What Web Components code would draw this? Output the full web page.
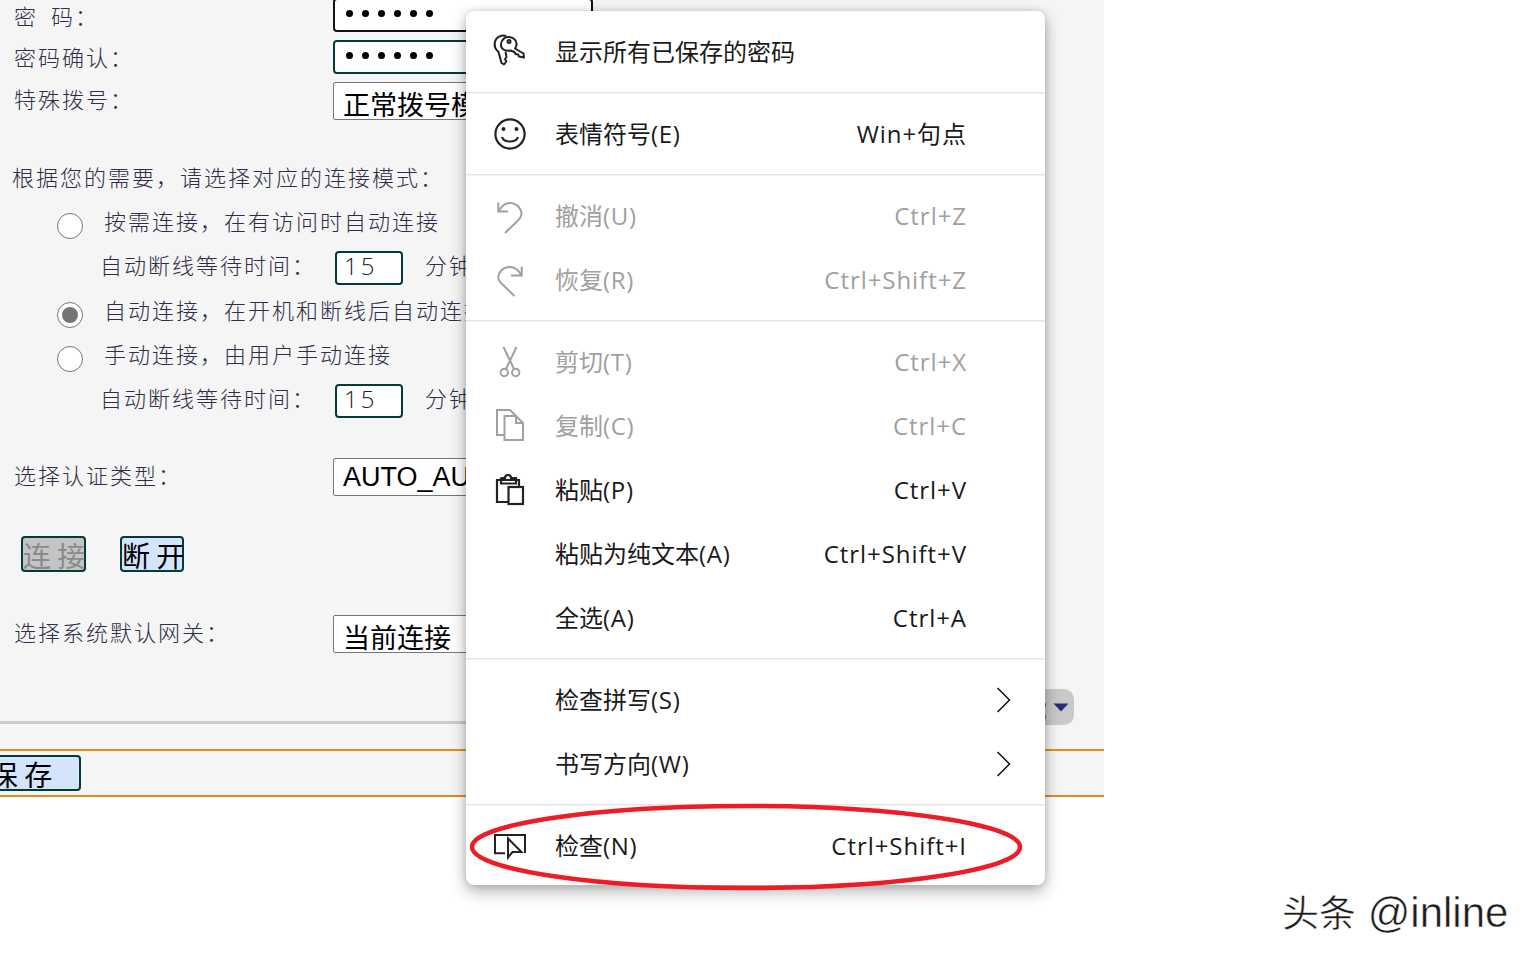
<!DOCTYPE html>
<html lang="zh-CN">
<head>
<meta charset="utf-8">
<title>连接设置</title>
<style>
html,body{margin:0;padding:0;background:#fff;overflow:hidden}
body{width:1536px;height:960px;position:relative;font-family:"Noto Sans CJK SC",sans-serif}
</style>
</head>
<body>
<x-page>
  <x-row style="height:34px;margin-top:-2px" label="密&#x2002;码&#xFF1A;" lx="14" ly="0"><x-input type="pw" dark w="260" h="34"></x-input></x-row>
  <x-row style="height:34px;margin-top:8px" label="密码确认&#xFF1A;" lx="14" ly="-1"><x-input type="pw" w="260" h="34"></x-input></x-row>
  <x-row style="height:38px;margin-top:8px" label="特殊拨号&#xFF1A;" lx="14" ly="-3"><x-select>正常拨号模式</x-select></x-row>

  <x-row style="height:34px;margin-top:41px" label="根据您的需要&#xFF0C;请选择对应的连接模式&#xFF1A;" lx="12" ly="-2"></x-row>

  <x-radio style="margin-top:11px" text="按需连接&#xFF0C;在有访问时自动连接"></x-radio>
  <x-wait style="margin-top:14px"></x-wait>
  <x-radio style="margin-top:10px" text="自动连接&#xFF0C;在开机和断线后自动连接" checked></x-radio>
  <x-radio style="margin-top:13px" text="手动连接&#xFF0C;由用户手动连接"></x-radio>
  <x-wait style="margin-top:14px"></x-wait>

  <x-row style="height:38px;margin-top:40px" label="选择认证类型&#xFF1A;" lx="14" ly="-3"><x-select latin>AUTO_AUTH</x-select></x-row>

  <x-actions style="margin-top:40px"></x-actions>

  <x-row style="height:38px;margin-top:43px" label="选择系统默认网关&#xFF1A;" lx="14" ly="-3"><x-select>当前连接</x-select></x-row>

  <x-footer style="margin-top:36px"></x-footer>
</x-page>

<x-menu>
  <x-group>
    <x-item label="显示所有已保存的密码"><svg viewBox="0 0 32 32" fill="none" stroke="#222" stroke-width="2" stroke-linejoin="round"><path d="M12.300 0 C8 -1.500 2.500 .5 1 5.500 C0 9.500 1.500 13.500 4.500 16 L7.500 27 L10 28.500 L12.300 25.500 L11 23 L12.500 21 L11.500 15.500"/><path d="M7 8 C7.500 3.500 11 .5 15.500 1 C20 1.500 23 5 22.500 9 C22.300 10.500 21.800 11.500 21 12.500 L29.500 17.500 L30 21.500 L25 20.500 L24 18.500 L21.500 18 L20.500 16 L16.500 14.500 C11 15.500 6.500 13 7 8 Z"/><circle cx="15" cy="5.500" r="1.500"/></svg></x-item>
  </x-group>
  <x-sep></x-sep>
  <x-group>
    <x-item label="表情符号(E)" shortcut="Win+句点"><svg viewBox="0 0 32 32" fill="none" stroke="#222" stroke-width="2.2"><circle cx="16" cy="16" r="14.6"/><circle cx="9.5" cy="11" r="2" fill="#222" stroke="none"/><circle cx="22.5" cy="11" r="2" fill="#222" stroke="none"/><path d="M8 19 C10 25 22 25 24 19"/></svg></x-item>
  </x-group>
  <x-sep></x-sep>
  <x-group>
    <x-item disabled label="撤消(U)" shortcut="Ctrl+Z"><svg viewBox="0 0 32 32" fill="none" stroke="#a0a0a0" stroke-width="2"><path d="M4.3 2.5 V11.5 H14"/><path d="M4.3 11.5 C8 5 12 3 16 3 C23 3 29 10 27 16 C26.500 18 25 19 24 20.500 L11 33"/></svg></x-item>
    <x-item disabled label="恢复(R)" shortcut="Ctrl+Shift+Z"><svg viewBox="0 0 32 32" fill="none" stroke="#a0a0a0" stroke-width="2"><path d="M27.700 2.500 V11.500 H17"/><path d="M27.700 11.500 C24 5 20 3 16 3 C9 3 3 9 4.500 15 C5 17 6 18 7 19 L20.500 32"/></svg></x-item>
  </x-group>
  <x-sep></x-sep>
  <x-group>
    <x-item disabled label="剪切(T)" shortcut="Ctrl+X"><svg viewBox="0 0 32 32" fill="none" stroke="#a0a0a0" stroke-width="2"><path d="M9.500 1 L20.500 24"/><path d="M22.500 1 L11.500 24"/><circle cx="10.300" cy="26.500" r="3.700"/><circle cx="21.700" cy="26.500" r="3.700"/></svg></x-item>
    <x-item disabled label="复制(C)" shortcut="Ctrl+C"><svg viewBox="0 0 32 32" fill="none" stroke="#a0a0a0" stroke-width="2"><path d="M10.500 25 H3 V0 H16 L22 6"/><path d="M10.500 6 H22 L29 13 V30 H10.500 Z"/><path d="M22 6 V13 H29"/></svg></x-item>
    <x-item label="粘贴(P)" shortcut="Ctrl+V"><svg viewBox="0 0 32 32" fill="none" stroke="#222" stroke-width="2.200"><path d="M14 28 H3 V6 H25 V12"/><path d="M7 3.500 V9.500 H22 V4 H17 C17 0 11 0 11 4 H7"/><rect x="14.500" y="13" width="14.500" height="17"/></svg></x-item>
    <x-item label="粘贴为纯文本(A)" shortcut="Ctrl+Shift+V"></x-item>
    <x-item label="全选(A)" shortcut="Ctrl+A"></x-item>
  </x-group>
  <x-sep></x-sep>
  <x-group>
    <x-item label="检查拼写(S)" chevron></x-item>
    <x-item label="书写方向(W)" chevron></x-item>
  </x-group>
  <x-sep></x-sep>
  <x-group style="padding-bottom:7px">
    <x-item label="检查(N)" shortcut="Ctrl+Shift+I"><svg viewBox="0 0 32 32" fill="none" stroke="#222" stroke-width="2"><path d="M11 23.300 H1 V5 H31 V23"/><path d="M14 8.500 V27.500 L18.500 22 H27.500 Z"/></svg></x-item>
  </x-group>
</x-menu>

<x-annotation></x-annotation>
<x-watermark></x-watermark>

<script>
const FORM = '"Noto Sans CJK SC",sans-serif';
function def(name, html, init){
  customElements.define(name, class extends HTMLElement{
    constructor(){super();this.attachShadow({mode:'open'}).innerHTML=html;}
    connectedCallback(){ if(init) init.call(this,this.shadowRoot); }
  });
}
def('x-page',`<style>
:host{display:block;width:1104px;height:797px;background:#f5f5f5;overflow:hidden;position:relative;font-family:${FORM};font-size:22px;letter-spacing:2px;font-weight:300;color:#2e2e48}
</style><slot></slot>`);

def('x-row',`<style>
:host{display:flex;align-items:center;position:relative}
.l{white-space:nowrap;line-height:1;flex:none}
.f{position:absolute;left:333px;top:0}
</style><span class="l"></span><span class="f"><slot></slot></span>`,function(r){
  const l=r.querySelector('.l');
  l.innerHTML=this.getAttribute('label');
  l.style.marginLeft=this.getAttribute('lx')+'px';
  l.style.marginTop=(2*(+this.getAttribute('ly')))+'px';
});

def('x-input',`<style>
:host{display:block;box-sizing:border-box;background:#fff;border:2px solid #033b3b;border-radius:4px;overflow:hidden}
:host([dark]){border-color:#111}
.d{display:flex;gap:9px;padding:9.5px 0 0 11px}
.d i{display:block;width:7px;height:7px;border-radius:50%;background:#000}
.n{display:block;font:300 24px/24px "Open Sans","Liberation Sans",sans-serif;letter-spacing:3px;color:#222;padding-left:7px;padding-top:1px}
</style><div class="d"></div>`,function(r){
  this.style.width=this.getAttribute('w')+'px';
  this.style.height=this.getAttribute('h')+'px';
  const d=r.querySelector('.d');
  if(this.getAttribute('type')==='pw'){ d.innerHTML='<i></i>'.repeat(6); }
  else { d.className='n'; d.textContent=this.getAttribute('value'); }
});

def('x-select',`<style>
:host{display:block;box-sizing:border-box;width:260px;height:38px;background:#fff;border:1px solid #777;border-radius:2px;overflow:hidden;font:400 27px/42px ${FORM};letter-spacing:0;color:#000;padding-left:9px;white-space:nowrap}
:host([latin]){font-family:"Liberation Sans",sans-serif;line-height:36px}
</style><slot></slot>`);

def('x-radio',`<style>
:host{display:flex;align-items:center;height:31px;padding-left:57px;position:relative}
.c{width:26px;height:26px;box-sizing:border-box;border:1px solid #777;border-radius:50%;background:#fff;flex:none;display:flex;align-items:center;justify-content:center;margin-top:9px}
:host([checked]) .c i{display:block;width:16px;height:16px;border-radius:50%;background:#757575}
.t{margin-left:21px;line-height:1;white-space:nowrap;margin-top:-4px}
</style><span class="c"><i></i></span><span class="t"></span>`,function(r){
  r.querySelector('.t').textContent=this.getAttribute('text');
});

def('x-wait',`<style>
:host{display:flex;align-items:center;height:34px;padding-left:100px;white-space:nowrap}
.t{width:235px;line-height:1;margin-top:-8px}
.u{margin-left:22px;line-height:1;margin-top:-8px}
</style><span class="t">自动断线等待时间&#xFF1A;</span><x-input w="68" h="34" type="num" value="15"></x-input><span class="u">分钟</span>`);

def('x-btn',`<style>
:host{display:block;box-sizing:border-box;height:36px;border:2px solid #033b3b;border-radius:4px;background:#d3e4fb;color:#000;font:400 28px/34px ${FORM};letter-spacing:0;text-align:center;white-space:pre;flex:none}
:host([disabled]){background:#c4c4c4;color:#8a8a8a}
</style><slot></slot>`);

def('x-actions',`<style>
:host{display:flex;padding-left:21px;gap:34px}
.a{width:65px}
.b{width:64px}
</style><x-btn class="a" disabled>连 接</x-btn><x-btn class="b">断 开</x-btn>`);

def('x-footer',`<style>
:host{display:block}
.dock{display:flex;justify-content:flex-end;padding-right:30px;height:36px}
.pill{width:60px;height:36px;background:#c9c9c9;border-radius:0 10px 10px 0;display:flex;align-items:center;justify-content:flex-end;padding-right:5px;box-sizing:border-box;position:relative}
.pill svg{display:block}
.pill i{position:absolute;left:30px;width:2px;height:4px;background:#5c7596}
.bar{height:3px;width:800px;background:#ccc;margin-top:-4px}
.save{margin-top:25px;border-top:2px solid #e88b1e;border-bottom:2px solid #e88b1e;height:44px;display:flex;align-items:center}
x-btn{width:120px;height:36px;margin-left:-39px}
</style><div class="dock"><div class="pill"><i style="top:14px"></i><i style="top:26px"></i><svg width="16" height="9" viewBox="0 0 16 9"><path d="M.5 .5 H15.500 L8 8.500 Z" fill="#2a2a7a"/></svg></div></div><div class="bar"></div><div class="save"><x-btn>保 存</x-btn></div>`);

def('x-menu',`<style>
:host{display:block;position:absolute;left:466px;top:11px;width:579px;background:#fff;border-radius:8px;box-shadow:0 6px 16px rgba(0,0,0,.32),0 0 6px rgba(0,0,0,.12);font-family:"Open Sans","Noto Sans CJK SC",sans-serif;font-size:24px;color:#1a1a1a;padding-top:1px}
</style><slot></slot>`);

def('x-group',`<style>:host{display:block;padding:8px 0}</style><slot></slot>`);
def('x-sep',`<style>:host{display:block;height:2px;background:linear-gradient(#e4e4e4 50%,#f2f2f2 50%)}</style>`);

def('x-item',`<style>
:host{display:flex;align-items:center;height:64px;position:relative;white-space:nowrap;color:#1a1a1a}
:host([disabled]){color:#a0a0a0}
.i{width:32px;height:32px;margin-left:28px;flex:none}
::slotted(svg){display:block;width:32px;height:32px;overflow:visible}
.l{margin-left:29px;flex:1;line-height:1}
.l b{font-weight:400;letter-spacing:.7px}
.s{margin-right:78px;line-height:1;letter-spacing:.95px}
.c{margin-right:34px;display:none}
:host([chevron]) .c{display:block}
:host([chevron]) .s{display:none}
</style><span class="i"><slot></slot></span><span class="l"></span><span class="s"></span>
<svg class="c" width="15" height="26" viewBox="0 0 15 26" fill="none" stroke="#111" stroke-width="1.500"><path d="M1.500 1 L13.500 13 L1.500 25"/></svg>`,function(r){
  const m=(this.getAttribute('label')).match(/^([^(]*)(\(.*\))?$/);
  const l=r.querySelector('.l');
  l.textContent=m[1];
  if(m[2]){const b=document.createElement('b');b.textContent=m[2];l.append(b);}
  r.querySelector('.s').textContent=this.getAttribute('shortcut')||'';
});

def('x-annotation',`<style>
:host{display:block;position:absolute;left:466px;top:800px;width:560px;height:94px;pointer-events:none}
svg{display:block}
</style><svg width="560" height="94" viewBox="0 0 560 94"><ellipse cx="280" cy="47" rx="274" ry="41" fill="none" stroke="#ee1c25" stroke-width="4.500"/></svg>`);

def('x-watermark',`<style>
:host{display:block;position:absolute;left:1282px;top:884px;font:42px/54px "Liberation Sans","Noto Sans CJK SC",sans-serif;color:#1c1c1c;white-space:nowrap;-webkit-text-stroke:.5px #fff}
.a{font-family:"Noto Sans CJK SC",sans-serif;font-size:37px}
</style><span class="a">头条</span> @inline`);
</script>
</body>
</html>
